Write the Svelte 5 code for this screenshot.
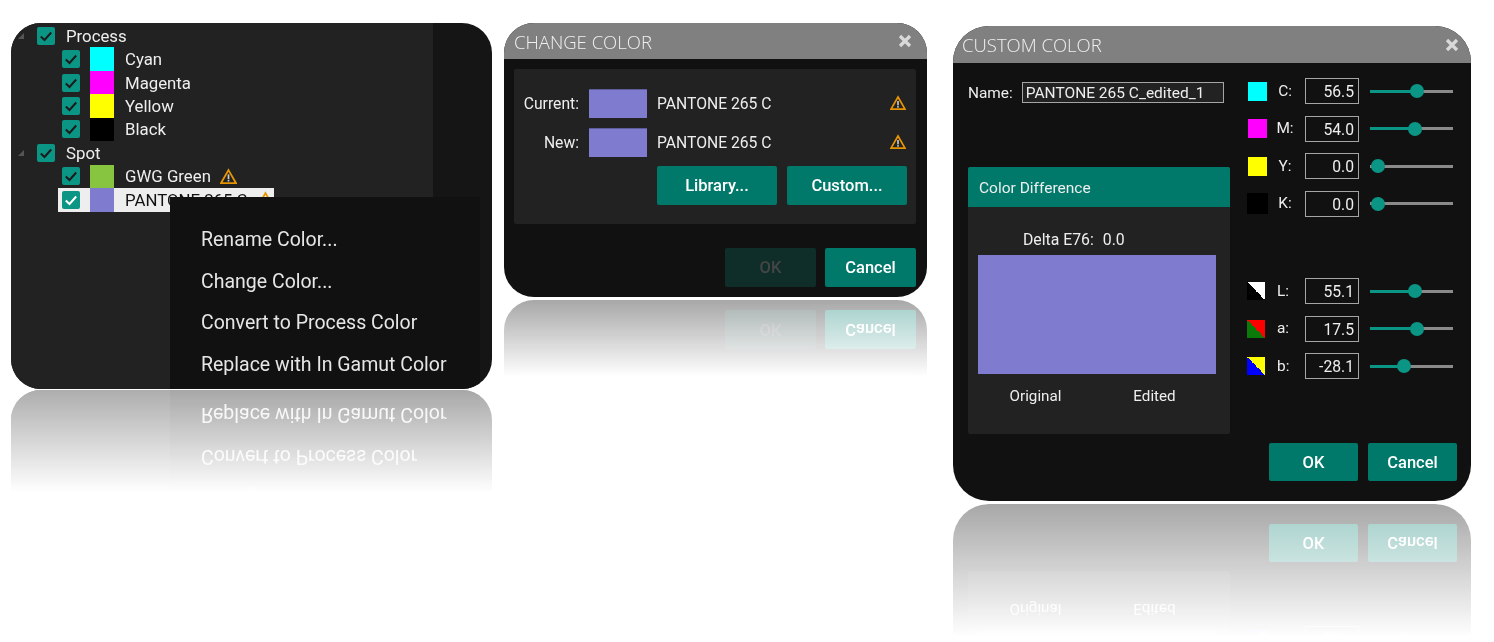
<script>
  const process = [
    { name: 'Cyan', color: '#00ffff' },
    { name: 'Magenta', color: '#ff00ff' },
    { name: 'Yellow', color: '#ffff00' },
    { name: 'Black', color: '#000000' }
  ];
  const menu = ['Rename Color...', 'Change Color...', 'Convert to Process Color', 'Replace with In Gamut Color'];
  const cmyk = [
    { l: 'C:', v: '56.5', p: 56.5, sw: 'sw-c' },
    { l: 'M:', v: '54.0', p: 54, sw: 'sw-m' },
    { l: 'Y:', v: '0.0', p: 0, sw: 'sw-y' },
    { l: 'K:', v: '0.0', p: 0, sw: 'sw-k' }
  ];
  const lab = [
    { l: 'L:', v: '55.1', p: 54.5, sw: 'sw-l' },
    { l: 'a:', v: '17.5', p: 56.5, sw: 'sw-a' },
    { l: 'b:', v: '-28.1', p: 40.5, sw: 'sw-b' }
  ];
</script>

{#snippet check()}
  <span class="check">
    <svg width="18" height="18" viewBox="0 0 18 18"><polyline points="3.8,9.5 7.5,13 14.2,5.5" fill="none" stroke="currentColor" stroke-width="2" /></svg>
  </span>
{/snippet}

{#snippet warn(s)}
  <svg class="warn" width={s} height={s} viewBox="0 0 16 16">
    <path d="M8 2 L15 14.2 H1 Z" fill="none" stroke="#e69500" stroke-width="1.7" stroke-linejoin="miter" />
    <rect x="7.2" y="6" width="1.6" height="4.4" fill="#cfcfcf" />
    <rect x="7.2" y="11.1" width="1.6" height="1.6" fill="#cfcfcf" />
  </svg>
{/snippet}

{#snippet close()}
  <svg class="close" width="14" height="14" viewBox="0 0 14 14"><path d="M2 2 L12 12 M12 2 L2 12" stroke="#d9d9d9" stroke-width="3.2" /></svg>
{/snippet}

{#snippet group(rows, kind)}
  <div class="rows {kind}">
    {#each rows as r}
      <div class="crow">
        <span class="csw {r.sw}"></span>
        <span class="clabel">{r.l}</span>
        <span class="cinput">{r.v}</span>
        <span class="slider" style="--p:{r.p}%"><i></i></span>
      </div>
    {/each}
  </div>
{/snippet}

<div class="stage">
  <section class="panel p1">
    <div class="tree">
      <div class="parent"><span class="tri"></span>{@render check()}<span class="plabel">Process</span></div>
      {#each process as c}
        <div class="child">{@render check()}<span class="sw" style="background:{c.color}"></span><span class="nm">{c.name}</span></div>
      {/each}
      <div class="parent"><span class="tri"></span>{@render check()}<span class="plabel">Spot</span></div>
      <div class="child">{@render check()}<span class="sw" style="background:#87c440"></span><span class="nm">GWG Green</span>{@render warn(17)}</div>
      <div class="child sel">{@render check()}<span class="sw" style="background:#7f7bcf"></span><span class="nm">PANTONE 265 C</span>{@render warn(17)}</div>
    </div>
    <div class="menu">
      {#each menu as m}<div class="mi">{m}</div>{/each}
    </div>
  </section>

  <section class="panel p2">
    <header class="title"><h2>CHANGE COLOR</h2>{@render close()}</header>
    <div class="card2">
      <div class="r2"><span class="l2">Current:</span><span class="s2"></span><span class="n2">PANTONE 265 C</span>{@render warn(16)}</div>
      <div class="r2"><span class="l2">New:</span><span class="s2"></span><span class="n2">PANTONE 265 C</span>{@render warn(16)}</div>
      <div class="b2"><button class="btn wide">Library...</button><button class="btn wide">Custom...</button></div>
    </div>
    <div class="foot2"><button class="btn off">OK</button><button class="btn">Cancel</button></div>
  </section>

  <section class="panel p3">
    <header class="title"><h2>CUSTOM COLOR</h2>{@render close()}</header>
    <div class="body3">
      <div class="left3">
        <div class="namerow"><span>Name:</span><span class="nameinput">PANTONE 265 C_edited_1</span></div>
        <div class="diff">
          <div class="diffhead">Color Difference</div>
          <div class="delta"><span>Delta E76:</span><span>0.0</span></div>
          <div class="bigsw"></div>
          <div class="caps"><span>Original</span><span>Edited</span></div>
        </div>
      </div>
      <div class="right3">
        {@render group(cmyk, 'ink')}
        {@render group(lab, 'lab')}
      </div>
    </div>
    <div class="foot3"><button class="btn b3">OK</button><button class="btn b3">Cancel</button></div>
  </section>
</div>

<style>
  :global(body) { margin: 0; background: #fff; }
  .stage {
    display: flex;
    align-items: flex-start;
    width: 1494px;
    height: 642px;
    box-sizing: border-box;
    padding: 23px 0 0 11px;
    overflow: hidden;
    font-family: Roboto, "Liberation Sans", sans-serif;
    font-size: 16.8px;
    color: #eee;
  }
  .panel {
    position: relative;
    flex: none;
    overflow: hidden;
    background: #111;
    box-sizing: border-box;
    -webkit-box-reflect: below 3px linear-gradient(transparent 72%, rgba(255,255,255,.37));
  }
  .p1 {
    width: 481px; height: 366px; border-radius: 30px; background: #151515;
    -webkit-box-reflect: below 1px linear-gradient(transparent 72%, rgba(255,255,255,.37));
  }
  .p2 { width: 423px; height: 274px; border-radius: 30px; margin-left: 12px; }
  .p3 { width: 518px; height: 475px; border-radius: 36px; margin-left: 26px; margin-top: 3px; }

  .tree { width: 422px; height: 100%; background: #222; padding-top: 1px; box-sizing: border-box; }
  .parent, .child { display: flex; align-items: center; height: 23.45px; }
  .parent { padding-left: 7px; }
  .tri { width: 0; height: 0; margin-right: 13px; border-style: solid; border-width: 0 0 6px 6px; border-color: transparent transparent #555 transparent; }
  .plabel { margin-left: 11px; }
  .child { margin-left: 47px; width: 216px; padding-left: 4px; box-sizing: border-box; }
  .child .sw { width: 24px; height: 100%; margin: 0 11px 0 10px; }
  .check { width: 18px; height: 18px; flex: none; background: #0b9585; border-radius: 2px; color: #1c1c1c; display: block; }
  .check svg { display: block; }
  .sel { background: #eee; color: #111; }
  .sel .check { color: #fff; }
  .warn { flex: none; margin-left: 9px; }

  .menu {
    position: absolute;
    left: 159px; top: 174px;
    width: 310px; height: 192px;
    background: #111;
    box-sizing: border-box;
    padding: 22px 0 0 31px;
    font-size: 19.5px;
    color: #e6e6e6;
  }
  .mi { height: 41.7px; line-height: 42px; white-space: nowrap; }

  .title { display: flex; justify-content: space-between; align-items: center; background: #808080; }
  .p2 .title { height: 36px; padding: 0 15px 0 10px; }
  .p3 .title { height: 37px; padding: 0 12px 0 9px; }
  h2 { margin: 0; font-family: "Open Sans", sans-serif; font-weight: 300; font-size: 18.5px; color: #f0f0f0; }

  .card2 { margin: 10px 11px 0 10px; height: 155px; background: #222; border-radius: 2px; box-sizing: border-box; padding-top: 19px; }
  .r2 { display: flex; align-items: center; height: 30px; margin-bottom: 9px; font-size: 15.7px; }
  .l2 { width: 65px; text-align: right; margin-right: 10px; }
  .s2 { width: 58px; height: 29px; background: #7f7bcf; border-top: 1px solid #5f5c9e; box-sizing: border-box; margin-right: 10px; }
  .n2 { flex: 1; }
  .r2 .warn { margin: 0 10px 0 0; }
  .b2 { display: flex; gap: 10px; margin: 0 0 0 143px; }
  .btn {
    border: 0; border-radius: 2px; background: #00796b; color: #fff;
    font: 500 16.5px Roboto, sans-serif; width: 91px; height: 39px; padding: 0;
  }
  .wide { width: 120px; }
  .off { background: #0f2e29; color: #454545; }
  .foot2 { display: flex; justify-content: flex-end; gap: 9px; padding: 24px 11px 0 0; }

  .body3 { display: flex; }
  .left3 { width: 277px; padding: 19px 0 0 15px; box-sizing: border-box; }
  .namerow { display: flex; align-items: center; font-size: 15.4px; height: 21px; }
  .nameinput { margin-left: 9px; width: 202px; height: 21px; line-height: 20px; border: 1px solid #a5a5a5; background: #222; box-sizing: border-box; padding-left: 3px; font-size: 15.5px; white-space: nowrap; }
  .diff { margin-top: 64px; width: 262px; height: 267px; background: #222; border-radius: 2px; font-size: 15.2px; }
  .diffhead { height: 40px; line-height: 42px; padding-left: 11px; background: #00796b; font-size: 15.5px; border-radius: 2px 2px 0 0; }
  .delta { display: flex; gap: 9px; padding-left: 55px; height: 48px; line-height: 65px; box-sizing: border-box; font-size: 15.8px; }
  .bigsw { margin-left: 10px; width: 238px; height: 119px; background: #7f7bcf; }
  .caps { display: grid; grid-template-columns: 119px 119px; margin-left: 8px; line-height: 44px; text-align: center; }

  .right3 { padding: 15px 0 0 18px; display: flex; flex-direction: column; gap: 61.5px; }
  .rows { display: flex; flex-direction: column; gap: 11.5px; }
  .crow { display: flex; align-items: center; height: 26px; }
  .csw { width: 19px; height: 19px; margin-right: 6px; }
  .lab .csw { width: 18px; height: 18px; margin: 0 8px 0 -1px; }
  .sw-c { background: #0ff; }
  .sw-m { background: #f0f; }
  .sw-y { background: #ff0; }
  .sw-k { background: #000; box-shadow: 0 0 0 1px #000; }
  .sw-l { background: linear-gradient(45deg, #000 50%, #fff 50%); }
  .sw-a { background: linear-gradient(45deg, #0a7a0a 50%, #f00 50%); }
  .sw-b { background: linear-gradient(45deg, #00f 50%, #ff0 50%); }
  .clabel { width: 24px; text-align: center; font-size: 15.4px; margin-right: 8px; line-height: 27px; }
  .lab .clabel { text-align: left; padding-left: 4px; box-sizing: border-box; }
  .cinput { width: 54px; height: 26px; line-height: 25px; border: 1px solid #a5a5a5; box-sizing: border-box; text-align: right; padding-right: 4px; font-size: 15.7px; }
  .slider {
    position: relative; display: block; margin-left: 11px; width: 83px; height: 3px;
    background: linear-gradient(to right, #0b9585 var(--p), #8a8a8a var(--p));
  }
  .slider i { position: absolute; top: -5.5px; left: max(1px, calc(var(--p) - 7px)); width: 14px; height: 14px; border-radius: 50%; background: #0b9585; }
  .foot3 { position: absolute; right: 14px; bottom: 20px; display: flex; gap: 10px; }
  .b3 { width: 89px; height: 38px; }
</style>
